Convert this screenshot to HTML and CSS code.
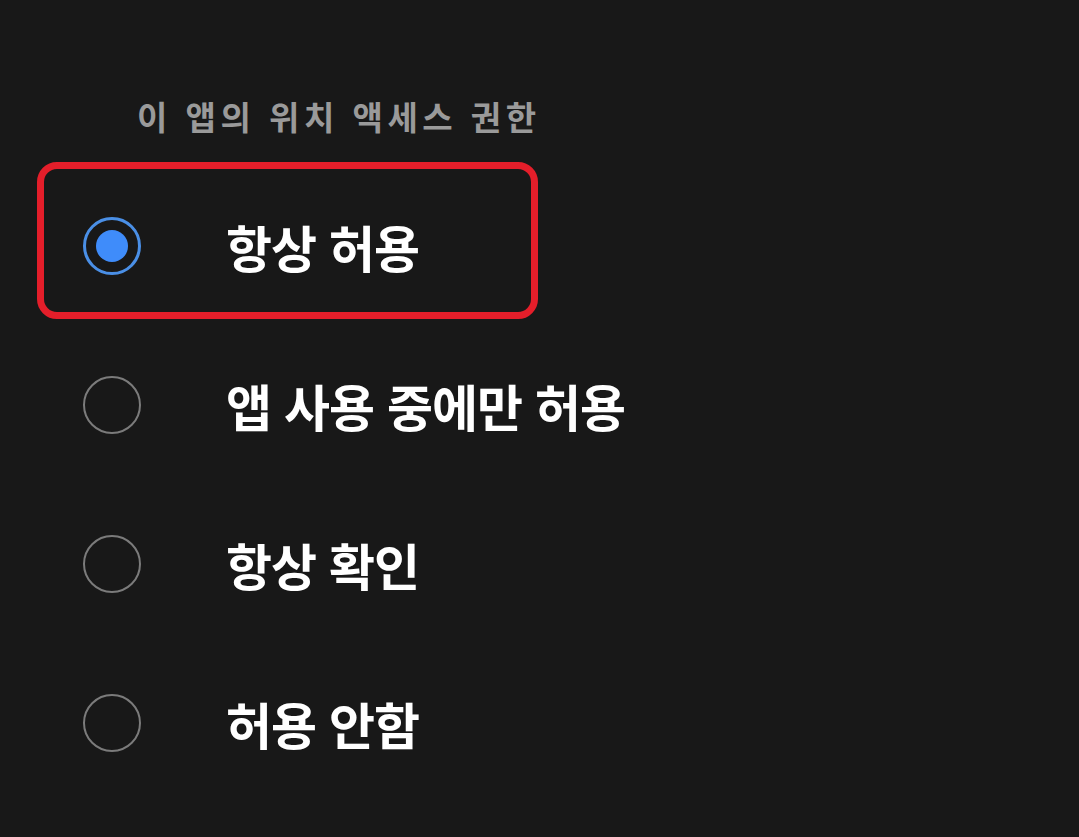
FILE: index.html
```html
<!DOCTYPE html>
<html lang="ko">
<head>
    <meta charset="UTF-8">
    <meta name="viewport" content="width=device-width, initial-scale=1.0">
    <title>위치 권한</title>
    <link rel="stylesheet" href="styles.css">
</head>
<body>
    <div id="permission-screen">
        <h2 class="section-title">이 앱의 위치 액세스 권한</h2>
        <div class="option-list">
            <label class="option selected">
                <span class="highlight"></span>
                <span class="radio"><span class="radio-dot"></span></span>
                <span class="option-label">항상 허용</span>
            </label>
            <label class="option">
                <span class="radio"></span>
                <span class="option-label">앱 사용 중에만 허용</span>
            </label>
            <label class="option">
                <span class="radio"></span>
                <span class="option-label">항상 확인</span>
            </label>
            <label class="option">
                <span class="radio"></span>
                <span class="option-label">허용 안함</span>
            </label>
        </div>
    </div>
</body>
</html>
```

FILE: styles.css
```css
body {
    margin: 0;
    background-color: #181818;
    font-family: "Noto Sans CJK KR", "Noto Sans", sans-serif;
    height: 837px;
    overflow: hidden;
}
#permission-screen {
    padding-top: 94px;
}
.section-title {
    margin: 0 0 0 137px;
    height: 44px;
    line-height: 44px;
    font-size: 33px;
    font-weight: 700;
    color: #9a9a9a;
    letter-spacing: 4.5px;
}
.option-list {
    display: flex;
    flex-direction: column;
    margin-top: 28px;
}
.option {
    position: relative;
    display: flex;
    align-items: center;
    height: 159px;
    padding-left: 83px;
}
.radio {
    box-sizing: border-box;
    width: 58px;
    height: 58px;
    border: 2.5px solid #7b7b7b;
    border-radius: 50%;
    display: flex;
    align-items: center;
    justify-content: center;
    flex-shrink: 0;
}
.option.selected .radio {
    border: 3px solid #4a8fe6;
}
.radio-dot {
    width: 32px;
    height: 32px;
    border-radius: 50%;
    background-color: #3f8cfa;
}
.option-label {
    margin-left: 85px;
    font-size: 50px;
    font-weight: 700;
    color: #ffffff;
    letter-spacing: -1px;
    line-height: 1;
}

/* red annotation frame */
.highlight {
    position: absolute;
    left: 37px;
    top: -4px;
    width: 501px;
    height: 157px;
    box-sizing: border-box;
    border: 7px solid #e41e2a;
    border-radius: 20px;
}
```
